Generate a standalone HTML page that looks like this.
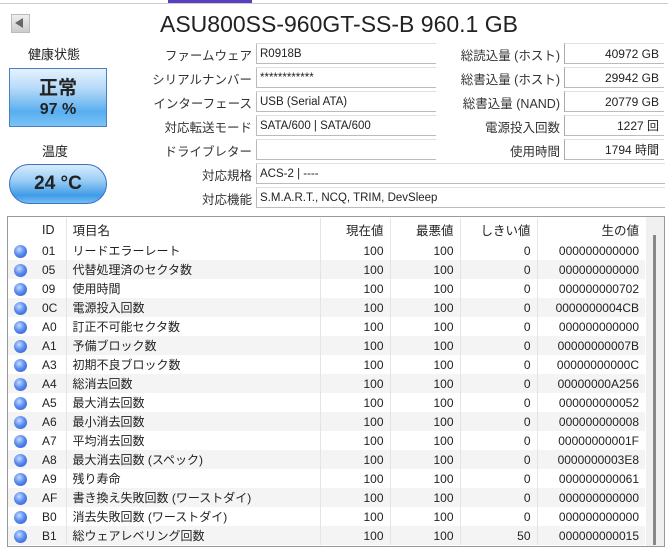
<!DOCTYPE html>
<html><head><meta charset="utf-8"><style>
*{margin:0;padding:0;box-sizing:border-box}
body{width:668px;height:552px;background:#fff;font-family:"Liberation Sans","Noto Sans CJK JP",sans-serif;color:#222;position:relative;overflow:hidden;font-size:12px}
.a{position:absolute}
.lbl{position:absolute;text-align:right;font-size:12.5px;color:#333}
.box{position:absolute;border:1px solid #bbb;border-right:none;border-top-color:#e0e0e0;height:21px;font-size:11.5px;padding:0 3px;line-height:20px;color:#222;white-space:nowrap}
.rbox{position:absolute;border-left:1px solid #aaa;border-bottom:1px solid #bbb;border-top:1px solid #e0e0e0;height:21px;width:100px;left:564px;text-align:right;padding:0 5px;line-height:20px;font-size:12px}
table{position:absolute;left:8px;top:218px;border-collapse:collapse;font-size:12px}
td{height:19px;padding:0 6px;white-space:nowrap}
tr.h td{height:23px;font-size:12.5px}
td.n{text-align:right}
td+td{border-left:1px solid #e4e4e4}
tr:nth-child(odd):not(.h) td{background:#f4f4f4}
.dot{width:13px;height:13px;border-radius:50%;background:radial-gradient(circle at 40% 35%,#c9dcff 0,#5b8ef0 45%,#2950c8 100%);display:inline-block;vertical-align:middle}
</style></head><body>
<div class="a" style="left:0;top:3px;width:668px;height:1px;background:#ccc"></div>
<div class="a" style="left:168px;top:0;width:84px;height:3px;background:#5a3fc0"></div>
<div class="a" style="left:11px;top:14px;width:19px;height:19px;background:linear-gradient(#eee,#ccc);border:1px solid #bbb"></div>
<div class="a" style="left:15px;top:18px;width:0;height:0;border-top:5px solid transparent;border-bottom:5px solid transparent;border-right:8px solid #666"></div>
<div class="a" style="left:160px;top:11px;font-size:23px;color:#222">ASU800SS-960GT-SS-B 960.1 GB</div>
<div class="a" style="left:28px;top:44px;font-size:13px">健康状態</div>
<div class="a" style="left:9px;top:68px;width:98px;height:59px;border:1px solid #4a7fc0;background:linear-gradient(#e4f2ff 0,#b5d9f7 35%,#58aef0 75%,#7bc2f5 100%);text-align:center;font-weight:bold">
<div style="font-size:19px;margin-top:4px">正常</div><div style="font-size:16px;margin-top:1px">97 %</div></div>
<div class="a" style="left:42px;top:141px;font-size:13px">温度</div>
<div class="a" style="left:9px;top:164px;width:98px;height:40px;border:1px solid #3a70c0;border-radius:20px;background:linear-gradient(#d8ecff 0,#9ccef5 40%,#3f9be8 80%,#74bdf2 100%);text-align:center;font-weight:bold;font-size:19px;line-height:38px">24 °C</div>

<div class="lbl" style="right:416px;top:45px">ファームウェア</div>
<div class="lbl" style="right:416px;top:69px">シリアルナンバー</div>
<div class="lbl" style="right:416px;top:93px">インターフェース</div>
<div class="lbl" style="right:416px;top:117px">対応転送モード</div>
<div class="lbl" style="right:416px;top:141px">ドライブレター</div>
<div class="lbl" style="right:416px;top:165px">対応規格</div>
<div class="lbl" style="right:416px;top:189px">対応機能</div>
<div class="box" style="left:256px;top:43px;width:180px">R0918B</div>
<div class="box" style="left:256px;top:67px;width:180px">************</div>
<div class="box" style="left:256px;top:91px;width:180px">USB (Serial ATA)</div>
<div class="box" style="left:256px;top:115px;width:180px">SATA/600 | SATA/600</div>
<div class="box" style="left:256px;top:139px;width:180px"></div>
<div class="box" style="left:256px;top:163px;width:409px">ACS-2 | ----</div>
<div class="box" style="left:256px;top:187px;width:409px">S.M.A.R.T., NCQ, TRIM, DevSleep</div>

<div class="lbl" style="right:108px;top:45px">総読込量 (ホスト)</div>
<div class="lbl" style="right:108px;top:69px">総書込量 (ホスト)</div>
<div class="lbl" style="right:108px;top:93px">総書込量 (NAND)</div>
<div class="lbl" style="right:108px;top:117px">電源投入回数</div>
<div class="lbl" style="right:108px;top:141px">使用時間</div>
<div class="rbox" style="top:43px">40972 GB</div>
<div class="rbox" style="top:67px">29942 GB</div>
<div class="rbox" style="top:91px">20779 GB</div>
<div class="rbox" style="top:115px">1227 回</div>
<div class="rbox" style="top:139px">1794 時間</div>

<div class="a" style="left:7px;top:216px;width:658px;height:331px;border:1px solid #999"></div>
<div class="a" style="left:646px;top:217px;width:18px;height:329px;background:#f0f0f0"></div>
<div class="a" style="left:653px;top:235px;width:3px;height:310px;background:#888"></div>
<table>
<colgroup><col style="width:28px"><col style="width:30px"><col style="width:254px"><col style="width:70px"><col style="width:70px"><col style="width:77px"><col style="width:108px"></colgroup>
<tr class="h"><td></td><td style="border-left:none">ID</td><td>項目名</td><td class="n">現在値</td><td class="n">最悪値</td><td class="n">しきい値</td><td class="n">生の値</td></tr>
<tr><td><span class="dot"></span></td><td style="border-left:none">01</td><td>リードエラーレート</td><td class="n">100</td><td class="n">100</td><td class="n">0</td><td class="n">000000000000</td></tr>
<tr><td><span class="dot"></span></td><td style="border-left:none">05</td><td>代替処理済のセクタ数</td><td class="n">100</td><td class="n">100</td><td class="n">0</td><td class="n">000000000000</td></tr>
<tr><td><span class="dot"></span></td><td style="border-left:none">09</td><td>使用時間</td><td class="n">100</td><td class="n">100</td><td class="n">0</td><td class="n">000000000702</td></tr>
<tr><td><span class="dot"></span></td><td style="border-left:none">0C</td><td>電源投入回数</td><td class="n">100</td><td class="n">100</td><td class="n">0</td><td class="n">0000000004CB</td></tr>
<tr><td><span class="dot"></span></td><td style="border-left:none">A0</td><td>訂正不可能セクタ数</td><td class="n">100</td><td class="n">100</td><td class="n">0</td><td class="n">000000000000</td></tr>
<tr><td><span class="dot"></span></td><td style="border-left:none">A1</td><td>予備ブロック数</td><td class="n">100</td><td class="n">100</td><td class="n">0</td><td class="n">00000000007B</td></tr>
<tr><td><span class="dot"></span></td><td style="border-left:none">A3</td><td>初期不良ブロック数</td><td class="n">100</td><td class="n">100</td><td class="n">0</td><td class="n">00000000000C</td></tr>
<tr><td><span class="dot"></span></td><td style="border-left:none">A4</td><td>総消去回数</td><td class="n">100</td><td class="n">100</td><td class="n">0</td><td class="n">00000000A256</td></tr>
<tr><td><span class="dot"></span></td><td style="border-left:none">A5</td><td>最大消去回数</td><td class="n">100</td><td class="n">100</td><td class="n">0</td><td class="n">000000000052</td></tr>
<tr><td><span class="dot"></span></td><td style="border-left:none">A6</td><td>最小消去回数</td><td class="n">100</td><td class="n">100</td><td class="n">0</td><td class="n">000000000008</td></tr>
<tr><td><span class="dot"></span></td><td style="border-left:none">A7</td><td>平均消去回数</td><td class="n">100</td><td class="n">100</td><td class="n">0</td><td class="n">00000000001F</td></tr>
<tr><td><span class="dot"></span></td><td style="border-left:none">A8</td><td>最大消去回数 (スペック)</td><td class="n">100</td><td class="n">100</td><td class="n">0</td><td class="n">0000000003E8</td></tr>
<tr><td><span class="dot"></span></td><td style="border-left:none">A9</td><td>残り寿命</td><td class="n">100</td><td class="n">100</td><td class="n">0</td><td class="n">000000000061</td></tr>
<tr><td><span class="dot"></span></td><td style="border-left:none">AF</td><td>書き換え失敗回数 (ワーストダイ)</td><td class="n">100</td><td class="n">100</td><td class="n">0</td><td class="n">000000000000</td></tr>
<tr><td><span class="dot"></span></td><td style="border-left:none">B0</td><td>消去失敗回数 (ワーストダイ)</td><td class="n">100</td><td class="n">100</td><td class="n">0</td><td class="n">000000000000</td></tr>
<tr><td><span class="dot"></span></td><td style="border-left:none">B1</td><td>総ウェアレベリング回数</td><td class="n">100</td><td class="n">100</td><td class="n">50</td><td class="n">000000000015</td></tr>
</table>
</body></html>
